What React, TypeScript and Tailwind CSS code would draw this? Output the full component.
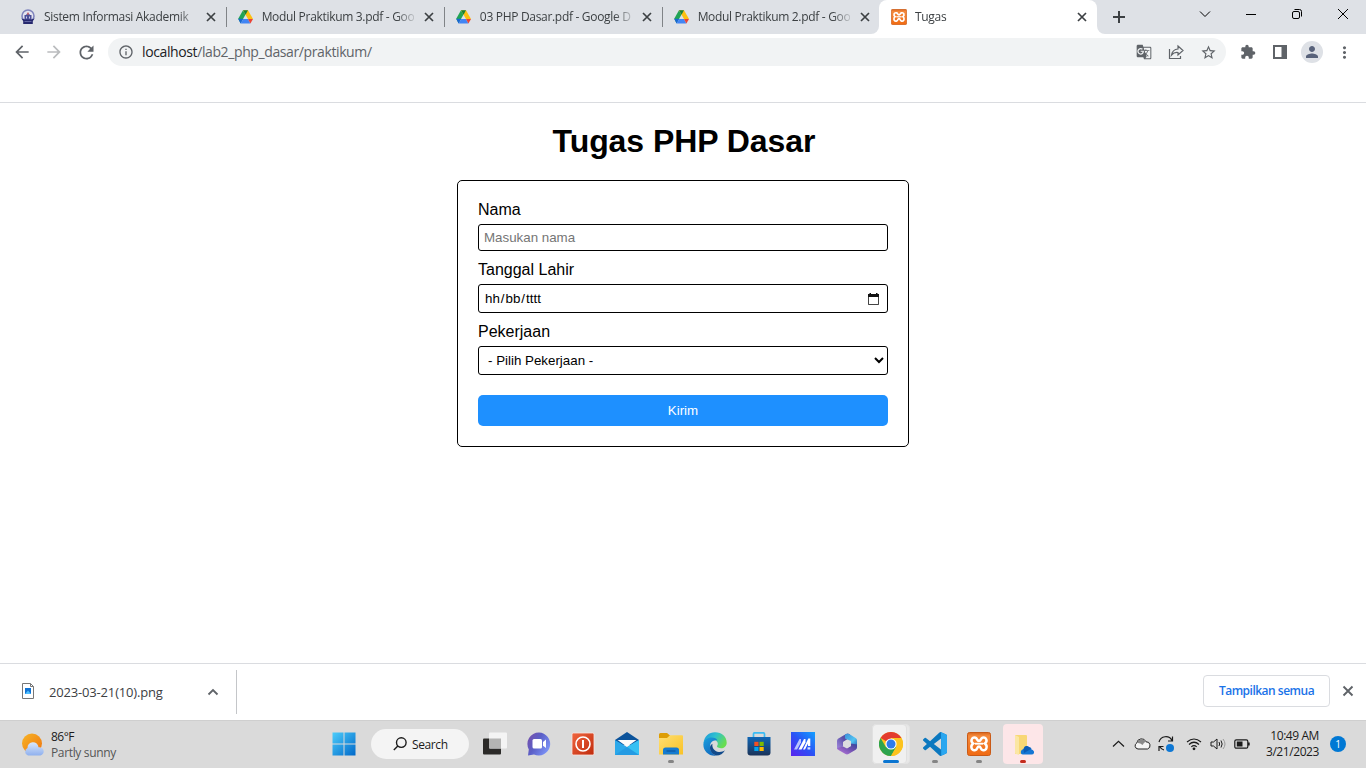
import React from 'react';
import {
  MdArrowBack, MdArrowForward, MdRefresh, MdInfoOutline, MdExtension, MdPerson,
  MdMoreVert, MdStarBorder, MdGTranslate,
} from 'react-icons/md';

const Drive = () => (
  <svg width="15" height="14" viewBox="0 0 15 14">
    <path d="M5 0.2L0.2 8.8L2.6 13.2L7.5 4.6Z" fill="#22a455" />
    <path d="M5 0.2H10L15 9H10Z" fill="#fcc010" />
    <path d="M5 0.2H10L7.5 4.7Z" fill="#188038" />
    <path d="M0.2 8.8H5.3L2.6 13.4Z" fill="#1967d2" />
    <path d="M5.2 9H10L12.4 13.5H2.6Z" fill="#4285f4" />
    <path d="M10 9H15L12.4 13.5Z" fill="#ea4335" />
  </svg>
);

const Campus = () => (
  <svg width="16" height="16" viewBox="0 0 16 16">
    <circle cx="8" cy="7" r="6" fill="#e4e4ef" stroke="#8085bd" strokeWidth="1.600" />
    <path d="M8 3.500L10 6H11.500V11H4.500V6H6Z" fill="#4b4e98" />
    <path d="M1.500 9.500L5 10.500H11L14.500 9.500L12.800 12V15H3.200V12Z" fill="#26286e" />
    <path d="M4.500 12.500H11.500" stroke="#7377b4" strokeWidth=".8" />
    <path d="M8 3L9.200 5.500H6.800Z" fill="#e8695f" />
    <path d="M6 7.500H7V9.500H6ZM9 7.500H10V9.500H9Z" fill="#c9cbe8" />
  </svg>
);

const Xampp = ({ size }: { size: number }) => (
  <svg width={size} height={size} viewBox="0 0 24 24">
    <defs><linearGradient id="xam" x1="0" y1="0" x2="0" y2="1"><stop stopColor="#d9651a" /><stop offset=".15" stopColor="#f58a3c" /><stop offset="1" stopColor="#f06a12" /></linearGradient></defs>
    <rect x=".5" y=".5" width="23" height="23" rx="2" fill="url(#xam)" stroke="#c95a17" />
    <path d="M8.500 5.800C4.600 4.700 3 9.200 6.200 11.500C3 13.800 4.200 19 8.400 18.100C10.600 17.500 9.800 14.500 12 14.500C14.200 14.500 13.400 17.500 15.600 18.100C19.800 19 21 13.800 17.800 11.500C21 9.200 19.400 4.700 15.500 5.800C13.600 6.400 14.200 8.900 12 8.900C9.800 8.900 10.400 6.400 8.500 5.800Z" fill="none" stroke="#fff" strokeWidth="2.500" />
    <path d="M8 11.700H16" stroke="#fff" strokeWidth="1.900" />
  </svg>
);

const Tab = ({ icon, title, line }: { icon: React.ReactNode; title: string; line?: boolean }) => (
  <div className="flex h-[34px] w-[218px] shrink-0 items-center">
    <span className="ml-3 flex w-4 justify-center">{icon}</span>
    <span className="ml-2 w-[154px] whitespace-nowrap text-[12px] leading-[18px] tracking-[-0.31px] text-[#3c4043] [mask-image:linear-gradient(to_right,black_134px,transparent_156px)]">
      {title}
    </span>
    <span className="ml-[6px] flex w-4 justify-center text-[#3c4043]">
      <svg className="ml-px" width="10" height="10" viewBox="0 0 10 10"><path d="M1 1L9 9M9 1L1 9" stroke="currentColor" strokeWidth="1.700" /></svg>
    </span>
    <span className={line ? 'ml-2 -mr-px h-5 w-px bg-[#808387]' : 'ml-2 -mr-px h-5 w-px'} />
  </div>
);

const Task = ({ children, mark }: { children: React.ReactNode; mark?: string }) => (
  <div className="flex h-12 w-11 flex-col items-center">
    <div className="mt-3 flex h-6 items-center justify-center">{children}</div>
    {mark && <span className={`mt-[4px] h-[3px] rounded-full ${mark}`} />}
  </div>
);

const WindowsLogo = () => (
  <svg width="24" height="24" viewBox="0 0 24 24">
    <defs><linearGradient id="win" x1="0" y1="0" x2="1" y2="1"><stop stopColor="#4ccdfb" /><stop offset="1" stopColor="#0068c9" /></linearGradient></defs>
    <path d="M.5 .5H11.500V11.500H.5ZM12.500 .5H23.500V11.500H12.500ZM.5 12.500H11.500V23.500H.5ZM12.500 12.500H23.500V23.500H12.500Z" fill="url(#win)" />
  </svg>
);

const TaskView = () => (
  <svg width="26" height="24" viewBox="0 0 26 24">
    <rect x="1" y="6.5" width="18" height="16" rx="1" fill="#2b2a28" />
    <rect x="7" y=".5" width="18" height="16" rx="1" fill="#f4f4f4" />
    <path d="M7 6.5H19V16.5H8Q7 16.5 7 15.5Z" fill="#b4b4b3" />
  </svg>
);

const Chat = () => (
  <svg width="24" height="24" viewBox="0 0 24 24">
    <defs><linearGradient id="chat" x1="0" y1="0" x2="1" y2=".6"><stop stopColor="#7a4fa8" /><stop offset=".5" stopColor="#5b5fc7" /><stop offset="1" stopColor="#7b91f5" /></linearGradient></defs>
    <path d="M12 .5A11.5 11.5 0 1 1 7 22.5L1 23.5L1.8 17.5A11.5 11.5 0 0 1 12 .5Z" fill="url(#chat)" />
    <rect x="5.5" y="7" width="9.5" height="9.5" rx="1.5" fill="#fff" />
    <path d="M16 10L19 7.6V16L16 13.8Z" fill="#fff" />
  </svg>
);

const Power = () => (
  <svg width="24" height="24" viewBox="0 0 24 24">
    <defs><linearGradient id="pow" x1="0" y1="0" x2="1" y2="1"><stop stopColor="#f0653f" /><stop offset="1" stopColor="#bf2b0c" /></linearGradient></defs>
    <rect x="1" y="1" width="22" height="22" rx="1.5" fill="url(#pow)" stroke="#fbe5df" strokeWidth=".8" />
    <circle cx="12" cy="12" r="7" fill="none" stroke="#fff" strokeWidth="1.6" />
    <path d="M12 8V16" stroke="#fff" strokeWidth="2" />
  </svg>
);

const Mail = () => (
  <svg width="24" height="24" viewBox="0 0 24 24">
    <path d="M0 8L12 0L24 8V13H0Z" fill="#0b539b" />
    <path d="M0 8L12 15L24 8V23H0Z" fill="#2ba8ea" />
    <path d="M12 15L24 8V23Z" fill="#35c0f3" />
    <path d="M2.500 8H21.500L12 14.800Z" fill="#fbfbfb" />
    <path d="M0 23L12 15L24 23Z" fill="#1f90dc" opacity=".55" />
  </svg>
);

const Folder = () => (
  <svg width="24" height="24" viewBox="0 0 24 24">
    <defs><linearGradient id="fol" x1="0" y1="0" x2="1" y2="1"><stop stopColor="#ffdf73" /><stop offset="1" stopColor="#f9c226" /></linearGradient></defs>
    <path d="M0 2.5Q0 1 1.5 1H8L11 3.5V7H0Z" fill="#dd9d05" />
    <path d="M0 6H8L11 3.2H23Q24 3.2 24 4.5V22.5H0Z" fill="url(#fol)" />
    <path d="M4 22.5V18Q4 15.5 6.5 15.5H17.5Q20 15.5 20 18V22.5Z" fill="#157bd0" />
    <path d="M8 19H16" stroke="#0f5ea8" strokeWidth="1.4" strokeLinecap="round" />
  </svg>
);

const Edge = () => (
  <svg width="24" height="24" viewBox="0 0 24 24">
    <defs>
      <linearGradient id="e1" x1="0" y1="0" x2="1" y2=".5"><stop stopColor="#1b94dc" /><stop offset=".5" stopColor="#2fc1cf" /><stop offset="1" stopColor="#67dd51" /></linearGradient>
      <linearGradient id="e2" x1="0" y1="0" x2=".6" y2="1"><stop stopColor="#1aa0df" /><stop offset="1" stopColor="#1269bd" /></linearGradient>
    </defs>
    <path d="M.5 11C1.5 4 6 .3 12 .3C19 .3 23.7 5 23.7 10.7C23.7 14.2 21 16.2 18 16.2C14.5 16.2 13.4 14.8 14.3 13.6C16 11 13.6 7.4 9.5 7.4C5 7.4 2 8.8 .5 11Z" fill="url(#e1)" />
    <path d="M.4 12C.8 8.2 4.5 5.6 8.8 5.6C11.6 5.6 13.7 6.8 14.6 8.5C10 7.5 6.6 11 7 15.5C7.3 19.2 9.7 22.6 13.5 23.6C5.8 24.7 0 18.6 .4 12Z" fill="url(#e2)" />
    <path d="M9.5 11.8C8.6 15 11 19.7 16 20C18.5 20.1 20.5 19.2 22 18.3C20.2 21.6 17 23.6 13.5 23.6C9.2 22.5 7 19 7 15.8C7 14 8 12.5 9.5 11.8Z" fill="#114a8b" />
  </svg>
);

const Store = () => (
  <svg width="24" height="24" viewBox="0 0 24 24">
    <defs><linearGradient id="sto" x1="0" y1="0" x2="0" y2="1"><stop stopColor="#0f66b5" /><stop offset="1" stopColor="#1b3358" /></linearGradient></defs>
    <path d="M6.5 6V2Q6.5 .8 7.7 .8H16.3Q17.5 .8 17.5 2V6" fill="none" stroke="#3bbcf4" strokeWidth="1.7" />
    <path d="M.5 5H23.500V20.500Q23.500 23.500 20.500 23.500H3.500Q.5 23.500 .5 20.500Z" fill="url(#sto)" />
    <path d="M7.300 9.800H11.500V14H7.300Z" fill="#f25022" /><path d="M12.500 9.800H16.700V14H12.500Z" fill="#7fba00" />
    <path d="M7.300 15H11.500V19H7.300Z" fill="#00a4ef" /><path d="M12.500 15H16.700V19H12.500Z" fill="#ffb900" />
  </svg>
);

const MyAsus = () => (
  <svg width="24" height="24" viewBox="0 0 24 24">
    <defs><linearGradient id="asu" x1="0" y1="1" x2="1" y2="0"><stop stopColor="#5a22ee" /><stop offset=".5" stopColor="#2b52f5" /><stop offset="1" stopColor="#12a0ff" /></linearGradient></defs>
    <path d="M0 0H24V24H0Z" fill="url(#asu)" />
    <path d="M3 17.500L8.500 7H10V10.500L6 17.500Z" fill="#b9c4ff" />
    <path d="M7.500 17.500L13 7H14.500V10.500L10.500 17.500Z" fill="#fff" />
    <path d="M12 17.500L17.300 6.500H19.300V14H17V11.500L14 17.500Z" fill="#fff" />
    <path d="M16.500 15.300H19.300V17.500H16.500Z" fill="#d6ddff" />
  </svg>
);

const Office = () => (
  <svg width="22" height="24" viewBox="0 0 22 24">
    <defs>
      <linearGradient id="of1" x1="1" y1="0" x2="0" y2="1"><stop stopColor="#4a5bb8" /><stop offset=".4" stopColor="#5a50a8" /><stop offset="1" stopColor="#a58be0" /></linearGradient>
      <linearGradient id="of2" x1="0" y1="0" x2="1" y2="1"><stop stopColor="#3e8fd8" /><stop offset=".6" stopColor="#52c4f2" /><stop offset="1" stopColor="#2b62b5" /></linearGradient>
      <linearGradient id="of3" x1="0" y1="1" x2="1" y2="0"><stop stopColor="#c07ce0" /><stop offset=".6" stopColor="#6b4fae" /><stop offset="1" stopColor="#33459c" /></linearGradient>
    </defs>
    <path d="M10 2L2 6.700Q1 7.500 1 9V17.500L7 14.500V10L14 5.500V2.500Q12 1 10 2Z" fill="url(#of1)" />
    <path d="M9 2.600Q11.500 1 14 2.500L20 6.200Q21 7 21 8.500V14.500L15 11.500V9L9 6.500Z" fill="url(#of2)" />
    <path d="M21 12.500V15.500Q21 17 19.700 17.800L12.500 22Q11 22.800 9.500 22L2.500 18Q1.300 17.200 1.300 16L7 14.500L11 16.500L15 14V11.500Z" fill="url(#of3)" />
    <path d="M7.500 10L11 8L14.800 10V14L11 16L7.500 14Z" fill="#dcdddf" />
  </svg>
);

const Chrome = () => (
  <svg width="24" height="24" viewBox="0 0 24 24">
    <circle cx="12" cy="12" r="12" fill="#fcc31e" />
    <path d="M12 12L1.600 6A12 12 0 0 1 22.400 6H12Z" fill="#e33b2e" />
    <path d="M1.600 6A12 12 0 0 0 12 24L17.200 15L12 12L6.800 15Z" fill="#2da44e" />
    <path d="M12 6H22.400A12 12 0 0 1 12 24L17.200 15A6 6 0 0 0 12 6Z" fill="#fcc31e" />
    <circle cx="12" cy="12" r="5.600" fill="#fff" />
    <circle cx="12" cy="12" r="4.500" fill="#2d7bea" />
  </svg>
);

const VsCode = () => (
  <svg width="24" height="24" viewBox="0 0 24 24">
    <path d="M23.15 2.587L18.21.21a1.494 1.494 0 0 0-1.705.29l-9.46 8.63-4.12-3.128a.999.999 0 0 0-1.276.057L.327 7.261A1 1 0 0 0 .326 8.740L3.899 12 .326 15.260a1 1 0 0 0 .001 1.479L1.650 17.940a.999.999 0 0 0 1.276.057l4.120-3.128 9.460 8.630a1.492 1.492 0 0 0 1.704.290l4.942-2.377A1.500 1.500 0 0 0 24 20.060V3.939a1.500 1.500 0 0 0-.850-1.352zm-5.146 14.861L10.826 12l7.178-5.448v10.896z" fill="#0b78bf" />
    <path d="M18 .15L18.210.210L23.150 2.587A1.500 1.500 0 0 1 24 3.939V20.060A1.500 1.500 0 0 1 23.150 21.400L18.210 23.790Z" fill="#2aa7f0" />
  </svg>
);

const CloudFolder = () => (
  <svg width="24" height="24" viewBox="0 0 24 24">
    <path d="M4 3H15Q16 3 16 4V22H4Z" fill="#f8d775" />
    <path d="M4 3L8 5V23L4 21.500Z" fill="#fbe6a4" />
    <path d="M10 21.500Q9 18 12.500 17Q14 12.500 18 15Q20.500 15 20.500 17.500Q23.500 18.500 23 21Q22.500 22.500 20.500 22.500H12Q10.500 22.500 10 21.500Z" fill="#1577d4" />
    <path d="M12.500 17Q14 12.500 18 15L20 17L13 21Z" fill="#0c5cb5" />
  </svg>
);

const Weather = () => (
  <svg width="24" height="24" viewBox="0 0 24 24">
    <defs>
      <linearGradient id="sun" x1="0" y1="0" x2="1" y2="1"><stop stopColor="#f7b526" /><stop offset="1" stopColor="#ef7410" /></linearGradient>
      <linearGradient id="cld" x1="0" y1="0" x2="0" y2="1"><stop stopColor="#dbe8fb" /><stop offset="1" stopColor="#8fb0ee" /></linearGradient>
    </defs>
    <circle cx="11" cy="11.500" r="10" fill="url(#sun)" />
    <path d="M7 23.500A4 4 0 0 1 6.500 16A5.500 5.500 0 0 1 17.500 15.300A4.200 4.200 0 0 1 19.500 23.500Z" fill="url(#cld)" />
  </svg>
);

const stroke = { fill: 'none', stroke: 'currentColor', strokeWidth: 1.2 } as const;

export default function App() {
  return (
    <div className="flex h-[768px] w-[1366px] flex-col overflow-hidden bg-white font-['Open_Sans','Noto_Sans',sans-serif]">
      <header className="flex h-[34px] shrink-0 bg-[#dee1e6] pl-2">
        <Tab icon={<Campus />} title="Sistem Informasi Akademik" line />
        <Tab icon={<Drive />} title="Modul Praktikum 3.pdf - Goo" line />
        <Tab icon={<Drive />} title="03 PHP Dasar.pdf - Google D" line />
        <Tab icon={<Drive />} title="Modul Praktikum 2.pdf - Goo" />
        <div className="-ml-[9px] flex h-[34px] w-[234px]">
          <span className="h-full w-2 bg-white"><span className="block h-full rounded-br-lg bg-[#dee1e6]" /></span>
          <div className="w-[218px] rounded-t-lg bg-white"><Tab icon={<Xampp size={16} />} title="Tugas" /></div>
          <span className="h-full w-2 bg-white"><span className="block h-full rounded-bl-lg bg-[#dee1e6]" /></span>
        </div>
        <div className="ml-[4px] flex items-center text-[#3c4043]">
          <svg width="20" height="20" viewBox="0 0 20 20"><path d="M4 10H16M10 4V16" stroke="currentColor" strokeWidth="2" /></svg>
        </div>
        <div className="ml-[70px] flex h-7 items-center gap-[34px] text-black">
          <svg width="12" height="12" viewBox="0 0 12 12"><path d="M1 3.500L6 8.500L11 3.500" {...stroke} strokeWidth={1} /></svg>
          <svg width="12" height="12" viewBox="0 0 12 12"><path d="M1 6.500H11" {...stroke} strokeWidth={1} /></svg>
          <svg width="12" height="12" viewBox="0 0 12 12"><rect x="1.500" y="3.500" width="7" height="7" rx="1.500" {...stroke} strokeWidth={1} /><path d="M3.500 1.500H8.500Q10.500 1.500 10.500 3.500V8.500" {...stroke} strokeWidth={1} /></svg>
          <svg width="12" height="12" viewBox="0 0 12 12"><path d="M1 1L11 11M11 1L1 11" {...stroke} strokeWidth={1} /></svg>
        </div>
      </header>

      <nav className="flex h-[69px] shrink-0 items-start border-b border-[#dadce0] pt-1 text-[#5f6368]">
        <div className="ml-[12px] flex h-7 w-[96px] items-center gap-3">
          <MdArrowBack size={20} /><MdArrowForward size={20} color="#babcbe" /><MdRefresh size={21} />
        </div>
        <div className="flex h-7 w-[1118px] items-center rounded-full bg-[#f1f3f4] pl-[10px]">
          <MdInfoOutline size={16} />
          <span className="ml-2 w-[994px] text-[14px] leading-5 tracking-[-0.39px]"><span className="text-[#202124]">localhost</span>/lab2_php_dasar/praktikum/</span>
          <div className="flex items-center gap-4">
            <MdGTranslate size={16} />
            <svg width="16" height="16" viewBox="0 0 16 16"><path d="M1.500 5V14.500H12.500V12" {...stroke} /><path d="M10 2L15 6.500L10 11V8.500Q6 8 3.500 11Q4.500 5.500 10 5Z" {...stroke} /></svg>
            <MdStarBorder size={17} />
          </div>
        </div>
        <div className="ml-[14px] flex h-7 items-center">
          <MdExtension size={16} />
          <svg className="ml-4" width="16" height="16" viewBox="0 0 16 16"><path d="M1 1H15V15H1ZM3 3V13H9.500V3Z" fill="currentColor" fillRule="evenodd" /></svg>
          <span className="ml-[13px] flex size-[22px] items-center justify-center rounded-full bg-[#dee1e6] text-[#58627a]"><MdPerson size={18} /></span>
          <MdMoreVert className="ml-3" size={19} />
        </div>
      </nav>

      <main className="flex h-[560px] shrink-0 flex-col items-center font-['Liberation_Sans',sans-serif] text-black">
        <h1 className="ml-[2px] mt-[19px] text-[32px] font-bold leading-[38px] tracking-[-0.06px]">Tugas PHP Dasar</h1>
        <form className="mt-5 flex h-[267px] w-[452px] flex-col rounded-[5px] border border-black p-5">
          <label className="text-[16px] leading-[18px]">Nama</label>
          <input placeholder="Masukan nama" className="mt-[5px] h-[27px] rounded-[3px] border border-black px-[5px] text-[13.333px] placeholder:text-[#757575]" />
          <label className="mt-[10px] text-[16px] leading-[18px]">Tanggal Lahir</label>
          <div className="mt-[5px] flex h-[29px] items-center justify-between rounded-[3px] border border-black pl-[6px] pr-2 text-[13.333px]">
            <span className="flex gap-px"><span>hh</span><span>/</span><span>bb</span><span>/</span><span>tttt</span></span>
            <svg width="12" height="12" viewBox="0 0 12 12"><path d="M1.500 2V11.500H11.500V2" fill="none" stroke="#444" /><path d="M1.500 11.500H11.500" stroke="#444" /><path d="M1 1H12V4H1ZM2.500 0H4V2H2.500ZM9 0H10.500V2H9Z" fill="#111" /></svg>
          </div>
          <label className="mt-[10px] text-[16px] leading-[18px]">Pekerjaan</label>
          <select className="mt-[5px] h-[29px] rounded-[3px] border border-black bg-white p-[5px] text-[13.333px]"><option>- Pilih Pekerjaan -</option></select>
          <button type="button" className="mt-5 h-[31px] rounded-[5px] bg-[#1e90ff] text-[13.333px] text-white">Kirim</button>
        </form>
      </main>

      <section className="flex h-[57px] shrink-0 items-center border-t border-[#dadce0] text-[#3c4043]">
        <svg className="mb-[2px] ml-5" width="16" height="18" viewBox="0 0 16 18"><path d="M2.500 1.500H10.500L13.500 4.500V16.500H2.500Z" fill="#fff" stroke="#777" /><path d="M10.500 1.500V4.500H13.500" fill="none" stroke="#777" /><rect x="5" y="6" width="6" height="6" fill="#1173d4" /><path d="M5 12L8 8.500L11 12Z" fill="#50c0ff" /></svg>
        <span className="ml-[13px] mt-px w-[158px] text-[13px] tracking-[-0.17px]">2023-03-21(10).png</span>
        <svg width="12" height="12" viewBox="0 0 12 12"><path d="M1.500 8.500L6 4L10.500 8.500" fill="none" stroke="#5f6368" strokeWidth="1.800" /></svg>
        <span className="ml-[17px] h-11 w-px bg-[#c4c6c9]" />
        <button className="-mt-[2px] ml-[966px] h-8 w-[127px] rounded-[4px] border border-[#dadce0] text-[12px] font-semibold tracking-[-0.5px] text-[#1a73e8]">Tampilkan semua</button>
        <svg className="-mt-[2px] ml-[12px] text-[#5f6368]" width="12" height="12" viewBox="0 0 12 12"><path d="M1.500 1.500L10.500 10.500M10.500 1.500L1.500 10.500" stroke="currentColor" strokeWidth="1.900" /></svg>
      </section>

      <footer className="flex h-12 shrink-0 border-t border-[#cfcfcf] bg-[#dadada] text-[#1b1b1b]">
        <div className="-mt-px flex h-12 w-[322px] items-center">
          <span className="ml-[21px]"><Weather /></span>
          <div className="ml-[6px] mt-px text-[12px] leading-4 tracking-[-0.5px]"><div>86°F</div><div className="tracking-[-0.35px] text-[#555]">Partly sunny</div></div>
        </div>
        <div className="-mt-px flex">
          <Task><WindowsLogo /></Task>
          <div className="ml-[5px] mr-1 mt-[9px] flex h-[30px] w-[98px] items-center rounded-full bg-[#f4f4f4] pl-[22px]">
            <svg width="14" height="14" viewBox="0 0 14 14"><circle cx="8.300" cy="5.600" r="4.800" {...stroke} strokeWidth={1.400} /><path d="M4.800 9L.8 13" {...stroke} strokeWidth={1.400} /></svg>
            <span className="ml-[5px] mt-px text-[12px] tracking-[-0.4px]">Search</span>
          </div>
          <Task><TaskView /></Task>
          <Task><Chat /></Task>
          <Task><Power /></Task>
          <Task><Mail /></Task>
          <Task mark="w-[6px] bg-[#858585]"><Folder /></Task>
          <Task><Edge /></Task>
          <Task><Store /></Task>
          <Task><MyAsus /></Task>
          <Task><Office /></Task>
          <div className="mt-1 h-10 w-11 pl-[3px]">
            <div className="h-10 w-[38px] rounded-[4px] border border-[#e3e3e3] bg-[#e8e8e8]">
              <div className="-ml-px -mt-px flex h-10 w-[35px] flex-col items-center rounded-[4px] border border-[#e0e0e0] bg-[#f0f0f0]"><div className="ml-[3px] mt-[7px]"><Chrome /></div><span className="ml-[3px] mt-[4px] h-[3px] w-4 rounded-full bg-[#0a75d1]" /></div>
            </div>
          </div>
          <Task mark="w-[6px] bg-[#858585]"><VsCode /></Task>
          <Task mark="w-[6px] bg-[#858585]"><Xampp size={24} /></Task>
          <div className="h-12 w-11 pl-[2px] pt-1">
            <div className="flex h-10 w-10 flex-col items-center rounded-[4px] bg-[#fde6e8]"><div className="mt-2"><CloudFolder /></div><span className="mt-[4px] h-[3px] w-[6px] rounded-full bg-[#c42b1c]" /></div>
          </div>
        </div>
        <div className="-mt-px ml-[67px] flex items-center">
          <svg width="13" height="12" viewBox="0 0 13 12"><path d="M1 8.500L6.500 3.300L12 8.500" {...stroke} /></svg>
          <svg className="ml-[9px]" width="17" height="14" viewBox="0 0 17 14"><path d="M4 12A3.200 3.200 0 0 1 2.800 6A4.800 4.800 0 0 1 12 4.800A3.700 3.700 0 0 1 13.500 12Z" fill="#f4f4f4" stroke="#222" /><path d="M3 6A4.800 4.800 0 0 1 12 4.800Q10 5 8.500 8Q6 5.500 3 6Z" fill="#8a8a8a" /></svg>
          <svg className="ml-[6px]" width="18" height="18" viewBox="0 0 18 18"><path d="M2 7A7 7 0 0 1 15 5.500M15.500 1.500V6H11M7 15Q4.500 14.500 3 12M2 16V11.500H6.500" {...stroke} /><circle cx="13" cy="13" r="4" fill="#0f78d4" /></svg>
          <svg className="ml-[11px]" width="16" height="14" viewBox="0 0 16 14"><path d="M1 5Q8 -1 15 5M3 7.500Q8 3 13 7.500M5.300 9.900Q8 7.500 10.700 9.900" {...stroke} /><circle cx="8" cy="11.800" r="1.400" fill="currentColor" /></svg>
          <svg className="ml-[8px]" width="17" height="14" viewBox="0 0 17 14"><path d="M1 5H3.500L7 2V12L3.500 9H1Z" {...stroke} strokeWidth={1} /><path d="M9 5Q10.300 7 9 9M11 3.500Q13.300 7 11 10.500" {...stroke} strokeWidth={1} /><path d="M13 2Q17 7 13 12" fill="none" stroke="#999" /></svg>
          <svg className="ml-[7px]" width="17" height="12" viewBox="0 0 17 12"><rect x=".8" y="1.800" width="13" height="8.400" rx="1.500" {...stroke} /><path d="M2.800 3.600H8.500V8.400H2.800ZM14 4.500H15.700V7.500H14Z" fill="currentColor" stroke="none" /></svg>
          <div className="ml-[13px] w-[55px] whitespace-nowrap text-right text-[12px] leading-4 tracking-[-0.42px]"><div>10:49 AM</div><div>3/21/2023</div></div>
          <span className="ml-[11px] flex size-4 items-center justify-center rounded-full bg-[#0078d4] text-[10px] text-white">1</span>
        </div>
      </footer>
    </div>
  );
}
